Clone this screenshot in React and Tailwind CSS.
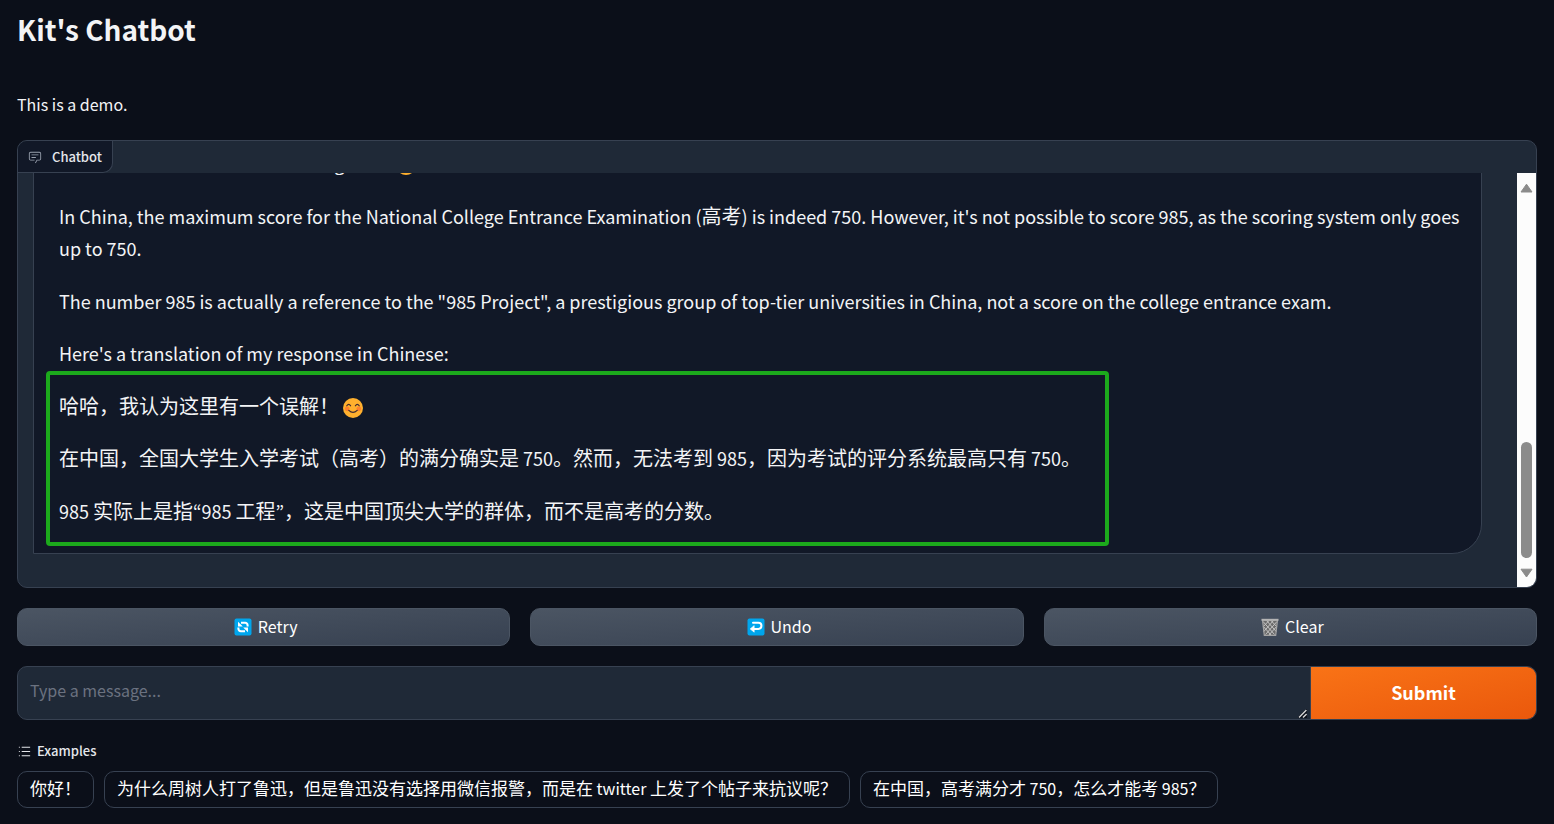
import React from "react";

const CJK = /([\u3000-\u303f\u4e00-\u9fff\uff00-\uffef]+)/;

// Latin runs are set one step smaller than the Chinese runs beside them,
// in the KR face, whose curly quotes are proportional.
function Mixed({ text, latin = "text-lg" }) {
  return text.split(CJK).map((run, i) =>
    CJK.test(run) ? (
      <React.Fragment key={i}>{run}</React.Fragment>
    ) : (
      <span key={i} className={`font-['Noto_Sans_CJK_KR',sans-serif] ${latin}`}>
        {run}
      </span>
    )
  );
}

function Smile() {
  return (
    <svg role="img" aria-label="😊" viewBox="0 0 20 20" className="inline-block size-5 align-[-4px]">
      <circle cx="10" cy="10" r="10" fill="#ffb02e" />
      <circle cx="4.2" cy="10.8" r="2.4" fill="#ff822d" />
      <circle cx="15.8" cy="10.8" r="2.4" fill="#ff822d" />
      <path d="M3.8 7.8q1.9-3 3.8 0M12.4 7.8q1.9-3 3.8 0M5.8 12.4q4.2 4 8.4 0" fill="none" stroke="#402a32" strokeWidth="1.2" strokeLinecap="round" />
    </svg>
  );
}

function RetryIcon() {
  return (
    <svg aria-hidden="true" viewBox="0 0 18 18" className="ml-1 size-[18px]">
      <rect x="0.5" y="0.5" width="17" height="17" rx="2" fill="#00a6ed" />
      <g fill="none" stroke="#fff" strokeWidth="2">
        <path d="M13.6 8.6V7.2a2.4 2.4 0 0 0-2.4-2.4H7" />
        <path d="M4.4 9.4v1.4a2.4 2.4 0 0 0 2.4 2.4H11" />
      </g>
      <path d="M4 3.8v4.8h4.8zM14 14.2V9.4H9.2z" fill="#fff" />
    </svg>
  );
}

function UndoIcon() {
  return (
    <svg aria-hidden="true" viewBox="0 0 18 18" className="ml-1 size-[18px]">
      <rect x="0.5" y="0.5" width="17" height="17" rx="2" fill="#00a6ed" />
      <path d="M6 4.8h5.4a3 3 0 0 1 0 6.1H6" fill="none" stroke="#fff" strokeWidth="2" strokeLinecap="round" />
      <path d="M7.2 7.6v6.6L3.2 10.9z" fill="#fff" stroke="#fff" strokeWidth="0.6" strokeLinejoin="round" />
    </svg>
  );
}

function TrashIcon() {
  return (
    <svg aria-hidden="true" viewBox="0 0 18 18" className="ml-1 size-[18px]">
      <path d="M1.5 2h15l-1.8 15.3H3.3z" fill="#6b6b6b" />
      <path
        d="M2 3.5l11.5 13M5.5 2.5l9.7 11M10 2.5l6 6.5M2.4 8.5l7.6 8.5M16 3.5l-11.5 13M12.5 2.5l-9.7 11M8 2.5L2 9M15.6 8.5L8 17"
        stroke="#c4c4c4"
        strokeWidth="1"
      />
      <path d="M1.5 2h15l-1.8 15.3H3.3z" fill="none" stroke="#a3a3a3" strokeWidth="1.2" />
      <path d="M0.5 1.8h17" stroke="#b4b4b4" strokeWidth="2" />
    </svg>
  );
}

function ChatIcon() {
  return (
    <svg aria-hidden="true" viewBox="0 0 32 32" className="size-[14px] text-gray-400" fill="currentColor">
      <path d="M17.74 30L16 29l4-7h6a2 2 0 0 0 2-2V8a2 2 0 0 0-2-2H6a2 2 0 0 0-2 2v12a2 2 0 0 0 2 2h9v2H6a4 4 0 0 1-4-4V8a4 4 0 0 1 4-4h20a4 4 0 0 1 4 4v12a4 4 0 0 1-4 4h-4.84Z" />
      <path d="M8 10h16v2H8zm0 6h10v2H8z" />
    </svg>
  );
}

function ListIcon() {
  return (
    <svg aria-hidden="true" viewBox="0 0 32 32" className="size-[15px]" fill="currentColor">
      <path d="M10 6h18v2H10zm0 18h18v2H10zm0-9h18v2H10zm-6 0h2v2H4zm0-9h2v2H4zm0 18h2v2H4z" />
    </svg>
  );
}

function ScrollTrack() {
  return (
    <div aria-hidden="true" className="flex w-[19px] shrink-0 flex-col items-center justify-between bg-[#fcfcfc] py-2">
      <svg viewBox="0 0 13 13" className="size-[13px]">
        <path d="M6.5 3.2L12 11H1z" fill="#8b8b8b" stroke="#8b8b8b" strokeWidth="1" strokeLinejoin="round" />
      </svg>
      <div className="mt-auto mb-2 h-[116px] w-[11px] rounded-full bg-[#8b8b8b]" />
      <svg viewBox="0 0 13 13" className="size-[13px]">
        <path d="M6.5 11L12 3.2H1z" fill="#8b8b8b" stroke="#8b8b8b" strokeWidth="1" strokeLinejoin="round" />
      </svg>
    </div>
  );
}

function Grip() {
  return (
    <svg aria-hidden="true" viewBox="0 0 10 10" className="pointer-events-none absolute right-[2px] bottom-0 size-[10px]">
      <path d="M0 8L8 0h1v9H0z" fill="#0b0f19" />
      <path d="M1 8.4L8.4 1M5 8.6L8.6 5" stroke="#d6d6d6" strokeWidth="1.4" />
    </svg>
  );
}

const actions = [
  { label: "Retry", Icon: RetryIcon },
  { label: "Undo", Icon: UndoIcon },
  { label: "Clear", Icon: TrashIcon },
];

const examples = [
  "你好！",
  "为什么周树人打了鲁迅，但是鲁迅没有选择用微信报警，而是在 twitter 上发了个帖子来抗议呢？",
  "在中国，高考满分才 750，怎么才能考 985？",
];

export default function App() {
  return (
    <main className="min-h-screen bg-[#0b0f19] px-[17px] pt-[9px] pb-4 font-['Noto_Sans_CJK_SC',sans-serif] text-[#f3f4f6]">
      <h1 className="text-[28px] leading-10 font-semibold">Kit's Chatbot</h1>
      <p className="mt-[41px] text-base leading-7">This is a demo.</p>

      <section aria-label="Chatbot" className="mt-[22px] overflow-hidden rounded-[10px] border border-[#374151] bg-[#1f2937]">
        <div className="flex h-8">
          <div className="flex items-center gap-[10px] rounded-br-[10px] border-r border-b border-[#374151] bg-[#111827] px-[10px] text-[13px] font-medium text-[#e5e7eb]">
            <ChatIcon />
            Chatbot
          </div>
        </div>
        <div className="flex h-[414px]">
          <div className="flex min-w-0 flex-1 flex-col justify-end overflow-hidden pr-[35px] pb-[33px] pl-[15px]">
            <div className="relative flex flex-col gap-5 rounded-br-[30px] border border-[#374151] bg-[#111827] pt-[25px] pr-4 pb-[26px] pl-[25px] text-xl leading-relaxed">
              <p>
                <Mixed text="I think there's a misunderstanding here! " />
                <Smile />
              </p>
              <p>
                <Mixed text="In China, the maximum score for the National College Entrance Examination (高考) is indeed 750. However, it's not possible to score 985, as the scoring system only goes up to 750." />
              </p>
              <p>
                <Mixed text={'The number 985 is actually a reference to the "985 Project", a prestigious group of top-tier universities in China, not a score on the college entrance exam.'} />
              </p>
              <p>
                <Mixed text="Here's a translation of my response in Chinese:" />
              </p>
              <p>
                <Mixed text="哈哈，我认为这里有一个误解！ " />
                <Smile />
              </p>
              <p>
                <Mixed text="在中国，全国大学生入学考试（高考）的满分确实是 750。然而，无法考到 985，因为考试的评分系统最高只有 750。" />
              </p>
              <p>
                <Mixed text="985 实际上是指“985 工程”，这是中国顶尖大学的群体，而不是高考的分数。" />
              </p>
              <div aria-hidden="true" className="absolute bottom-[7px] left-3 h-[175px] w-[1063px] rounded-sm border-4 border-[#1caa1c]" />
            </div>
          </div>
          <ScrollTrack />
        </div>
      </section>

      <div className="mt-5 grid grid-cols-3 gap-5">
        {actions.map(({ label, Icon }) => (
          <button
            key={label}
            type="button"
            className="flex h-[38px] items-center justify-center gap-[6px] rounded-[10px] border border-[#4b5563] bg-linear-to-br from-[#4b5563] to-[#374151] text-base text-white"
          >
            <Icon />
            <span className="pb-[2px]">{label}</span>
          </button>
        ))}
      </div>

      <form className="mt-5 flex h-[54px] overflow-hidden rounded-[10px] border border-[#374151] bg-[#1f2937]" onSubmit={(e) => e.preventDefault()}>
        <div className="relative min-w-0 flex-1 border-r border-[#374151]">
          <textarea
            aria-label="Message"
            rows={1}
            placeholder="Type a message..."
            className="block h-full w-full resize-none overflow-hidden bg-transparent px-3 py-[11px] text-base leading-6 outline-none placeholder:text-[#6b7280]"
          />
          <Grip />
        </div>
        <button type="submit" className="w-[225px] bg-linear-to-br from-[#f97316] to-[#ea580c] pb-[2px] text-lg font-semibold text-white">
          Submit
        </button>
      </form>

      <h2 className="mt-5 flex h-[22px] items-center gap-[5px] text-[13px] font-medium text-[#e5e7eb]">
        <ListIcon />
        Examples
      </h2>
      <div className="mt-[9px] flex flex-wrap gap-[10px]">
        {examples.map((text) => (
          <button key={text} type="button" className="h-[37px] rounded-[10px] border border-[#374151] px-3 pb-[3px] text-[17px] leading-7 text-white">
            <Mixed text={text} latin="text-base" />
          </button>
        ))}
      </div>
    </main>
  );
}
